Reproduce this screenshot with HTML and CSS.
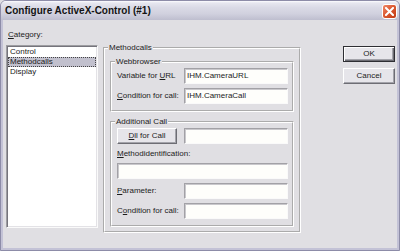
FILE: index.html
```html
<!DOCTYPE html>
<html>
<head>
<meta charset="utf-8">
<link rel="stylesheet" href="styles.css">
</head>
<body>
<div class="window">
  <div class="titlebar">
    <span class="title">Configure ActiveX-Control (#1)</span>
    <span class="close"><svg width="9" height="9" viewBox="0 0 9 9"><path d="M1 1L8 8M8 1L1 8" stroke="#fff" stroke-width="2" stroke-linecap="square"/></svg></span>
  </div>
  <div class="body">
    <div class="left">
      <div class="cat-label"><u>C</u>ategory:</div>
      <div class="listbox">
        <div class="item">Control</div>
        <div class="item sel">Methodcalls</div>
        <div class="item">Display</div>
      </div>
    </div>
    <fieldset class="group main">
      <legend>Methodcalls</legend>
      <fieldset class="group sub web">
        <legend>Webbrowser</legend>
        <div class="row"><span class="lbl">Variable for <u>U</u>RL</span><span class="input">IHM.CameraURL</span></div>
        <div class="row gap"><span class="lbl"><u>C</u>ondition for call:</span><span class="input">IHM.CameraCall</span></div>
      </fieldset>
      <fieldset class="group sub add">
        <legend>Additional Call</legend>
        <div class="row"><span class="btn dll"><u>D</u>ll for Call</span><span class="input"></span></div>
        <div class="mlabel"><u>M</u>ethodidentification:</div>
        <div class="input wide"></div>
        <div class="row gap"><span class="lbl"><u>P</u>arameter:</span><span class="input"></span></div>
        <div class="row gap"><span class="lbl">C<u>o</u>ndition for call:</span><span class="input"></span></div>
      </fieldset>
    </fieldset>
    <div class="buttons">
      <div class="btn ok">OK</div>
      <div class="btn cancel">Cancel</div>
    </div>
  </div>
</div>
</body>
</html>
```
FILE: styles.css
```css
html, body {
  margin: 0;
  padding: 0;
  background: #e0dfe3;
}
.window {
  width: 400px;
  height: 251px;
  box-sizing: border-box;
  border: 1px solid #8d8ca8;
  border-radius: 6px 6px 0 0;
  display: flex;
  flex-direction: column;
  background: #e0dfe3;
  font: 8px/10px "Liberation Sans", Arial, sans-serif;
  color: #1c1c1c;
  overflow: hidden;
}
u { text-decoration: underline; text-underline-offset: 1px; }
.titlebar {
  height: 19px;
  flex: none;
  display: flex;
  align-items: center;
  justify-content: space-between;
  padding: 0 2px 0 4px;
  background: linear-gradient(#fdfdff 0, #e6e6ef 2px, #d9d9e5 7px, #d0d0de 13px, #bebecf 19px);
}
.title {
  font: bold 10px/12px "Liberation Sans", Arial, sans-serif;
  color: #141414;
}
.close {
  width: 15px;
  height: 15px;
  box-sizing: border-box;
  margin-top: 2px;
  border: 1px solid #fff;
  border-radius: 3px;
  background: linear-gradient(135deg, #ef8a6c 0, #dc5a33 45%, #c13b14 100%);
  display: flex;
  align-items: center;
  justify-content: center;
}
.body {
  flex: 1;
  display: flex;
  align-items: flex-start;
  border: 2px solid #c3c2d6;
  border-top: none;
  padding: 10px 0 0 3px;
}
.left {
  width: 92px;
  flex: none;
}
.cat-label {
  height: 10px;
  margin-bottom: 5px;
  padding-left: 2px;
}
.listbox {
  height: 183px;
  box-sizing: border-box;
  background: #fff;
  border: 1px solid;
  border-color: #9d9da1 #fafafa #fafafa #9d9da1;
  box-shadow: inset 1px 1px 0 #75747c, inset -1px -1px 0 #e3e2e6;
  padding: 1px;
}
.item {
  height: 10px;
  padding-left: 1px;
  box-sizing: border-box;
  border: 1px solid transparent;
  line-height: 8px;
}
.item.sel {
  background: #c1c0cd;
  border: 1px dotted #444;
}
fieldset.group {
  margin: 0;
  min-width: 0;
  border: 2px groove #fff;
}
fieldset.group legend {
  padding: 0 1px;
  margin-left: -2px;
  line-height: 10px;
  height: 10px;
}
.main {
  width: 198px;
  box-sizing: border-box;
  margin: 13px 0 0 5px !important;
  padding: 3px 5px 4px 5px;
  flex: none;
}
.sub {
  padding: 1px 4px 6px 5px;
}
.web { margin-top: 1px !important; }
.add { margin-top: 5px !important; }
.row {
  display: flex;
  align-items: center;
  height: 16px;
}
.row.gap { margin-top: 4px; }
.lbl {
  width: 67px;
  flex: none;
  white-space: nowrap;
}
.input {
  display: block;
  box-sizing: border-box;
  height: 16px;
  width: 104px;
  margin-left: auto;
  background: #fefefb;
  border: 1px solid;
  border-color: #a2a1a6 #fafafa #fafafa #a2a1a6;
  box-shadow: inset 1px 1px 0 #c9c8cc;
  padding: 0 2px;
  line-height: 14px;
  white-space: nowrap;
}
.input.wide {
  width: auto;
  margin-top: 4px;
}
.mlabel {
  margin-top: 5px;
  height: 10px;
}
.btn {
  display: flex;
  align-items: center;
  justify-content: center;
  box-sizing: border-box;
  height: 16px;
  background: #e6e5ea;
  border: 1px solid;
  border-color: #fff #6d6d74 #6d6d74 #fff;
  box-shadow: inset -1px -1px 0 #a3a3aa;
}
.dll {
  width: 60px;
}
.buttons {
  margin-left: 42px;
  margin-top: 16px;
  width: 52px;
  flex: none;
}
.ok {
  border: 1px solid #2e2e33;
  box-shadow: inset 1px 1px 0 #fff, inset -1px -1px 0 #6d6d74, inset -2px -2px 0 #a3a3aa;
}
.cancel {
  margin-top: 6px;
}
```
